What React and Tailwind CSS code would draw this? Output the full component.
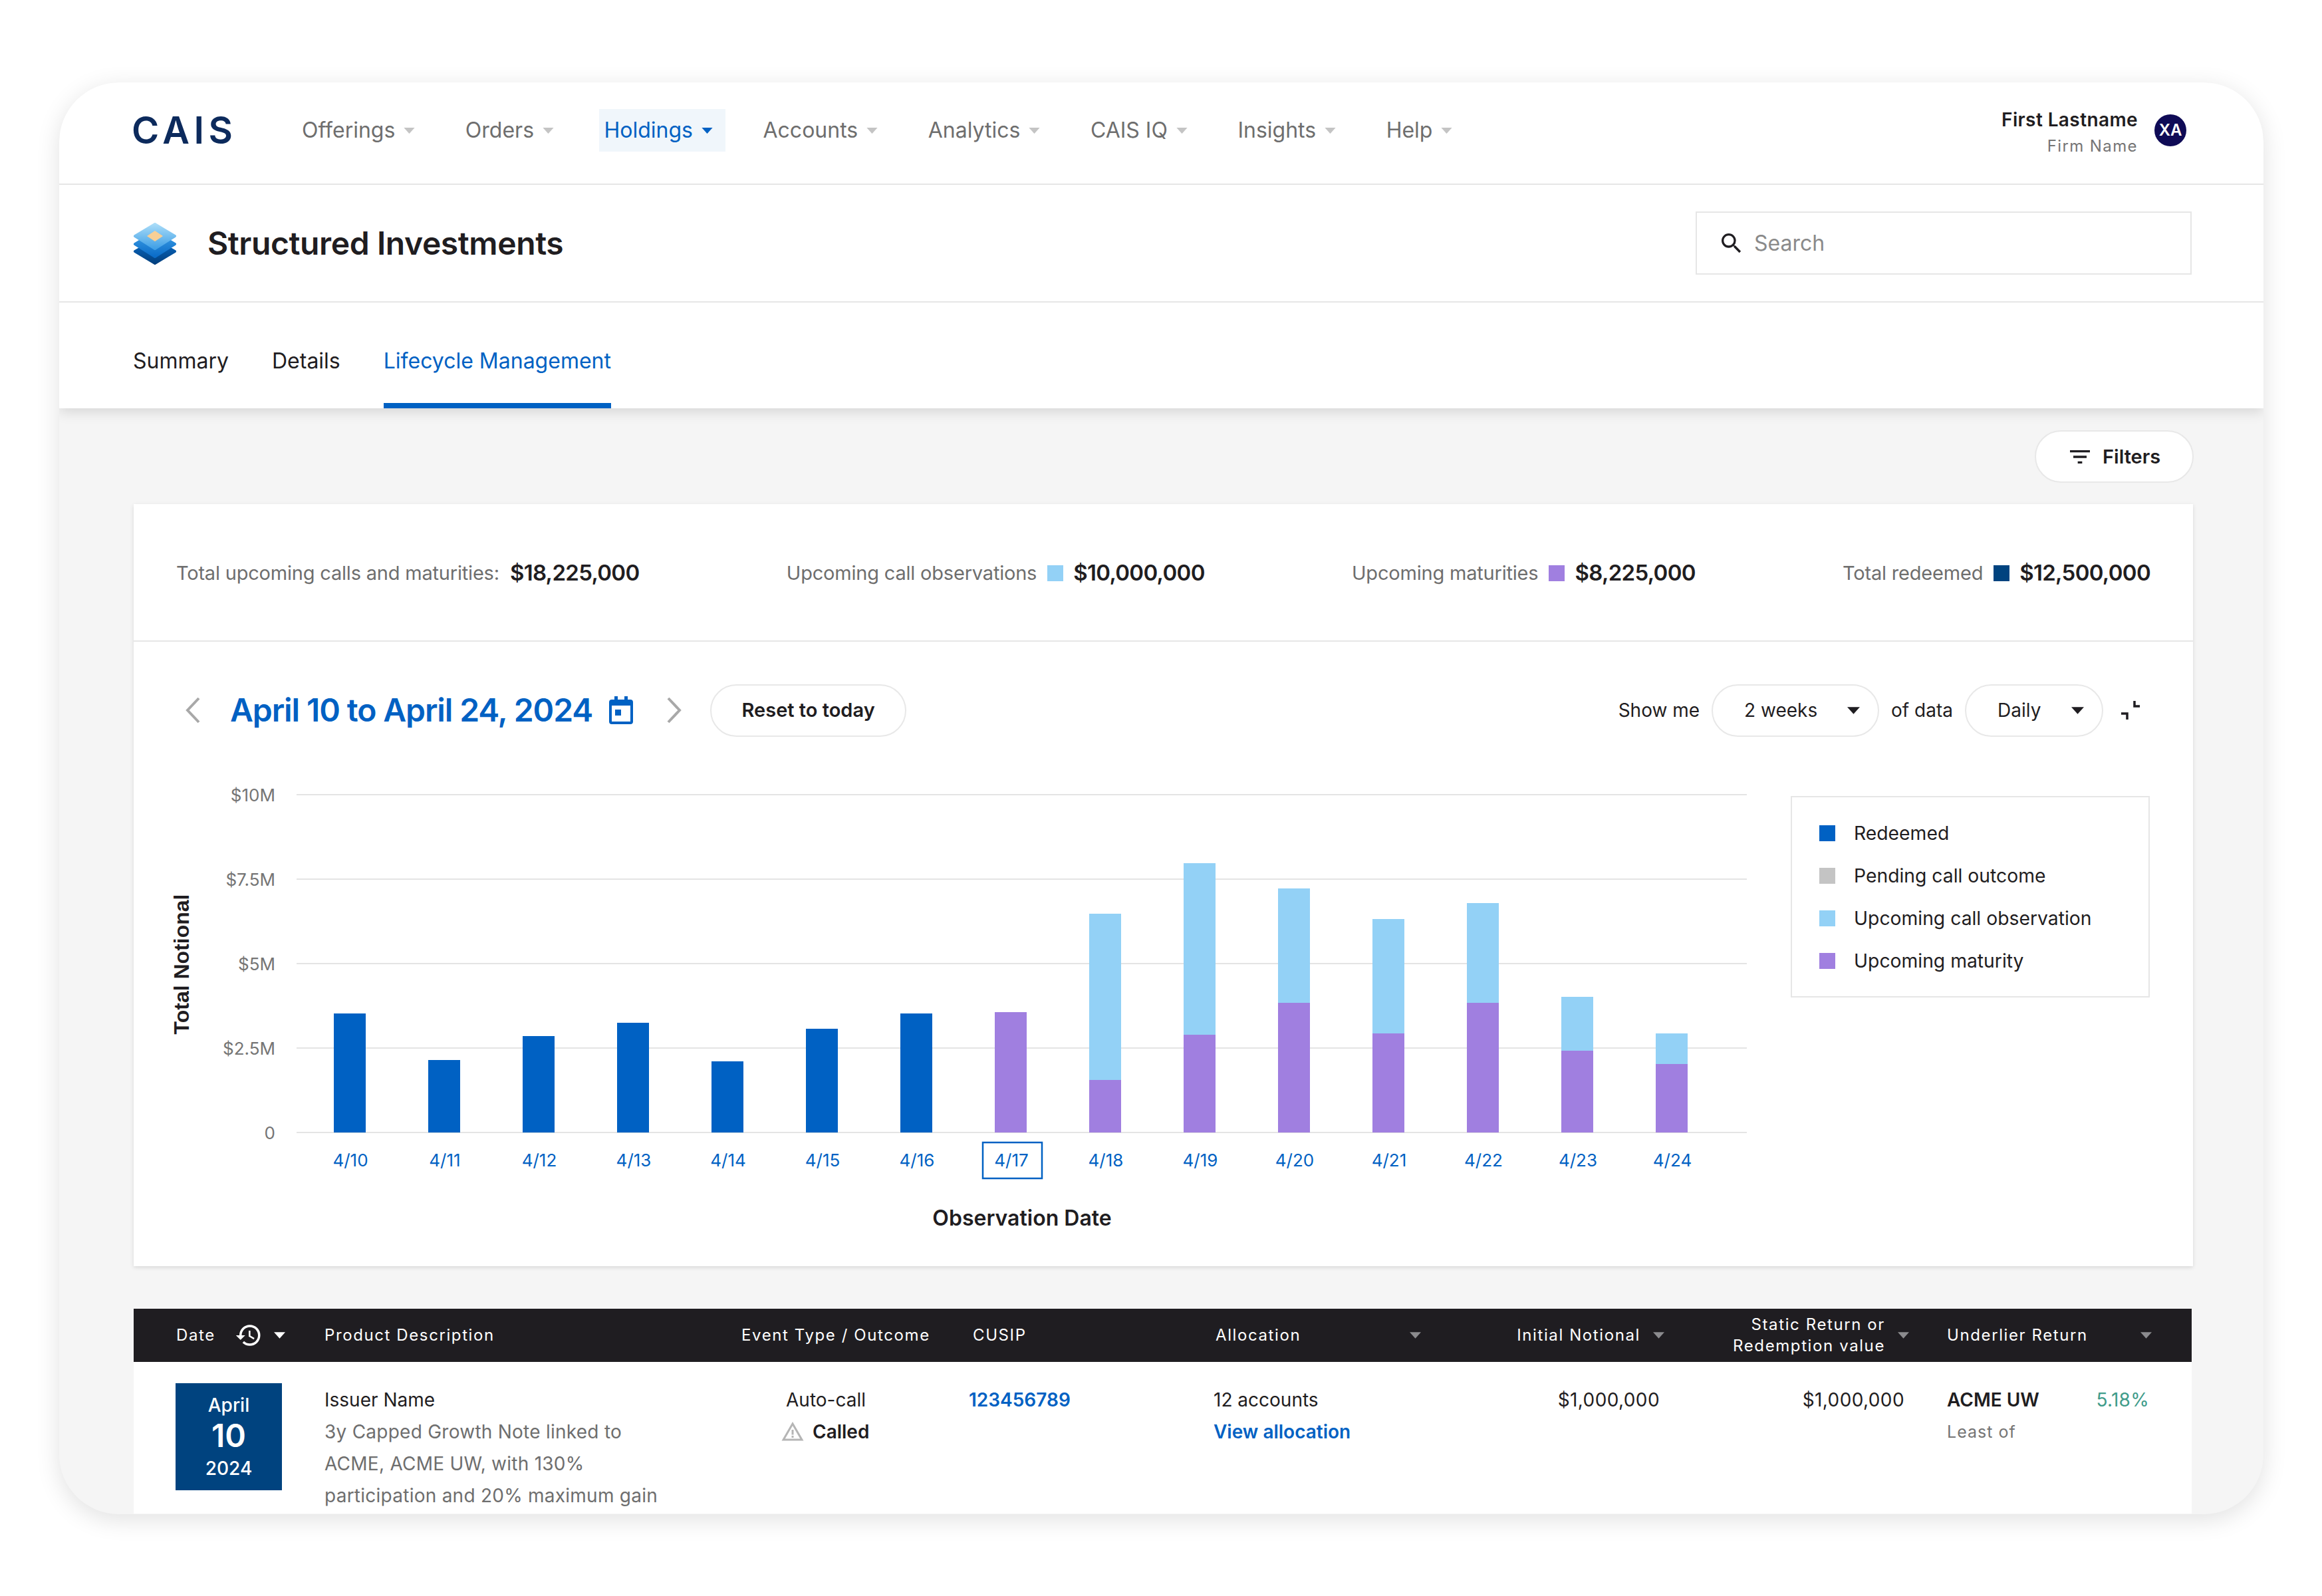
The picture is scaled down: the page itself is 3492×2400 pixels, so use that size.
import { MdSearch, MdFilterList, MdHistory, MdWarningAmber } from 'react-icons/md';

const NAV = ['Offerings', 'Orders', 'Holdings', 'Accounts', 'Analytics', 'CAIS IQ', 'Insights', 'Help'];

const BARS = [
  { redeemed: 1524 },
  { redeemed: 1594 },
  { redeemed: 1558 },
  { redeemed: 1538 },
  { redeemed: 1596 },
  { redeemed: 1547 },
  { redeemed: 1524 },
  { maturity: 1522 },
  { maturity: 1624, call: 1374 },
  { maturity: 1556, call: 1298 },
  { maturity: 1508, call: 1336 },
  { maturity: 1554, call: 1382 },
  { maturity: 1508, call: 1358 },
  { maturity: 1580, call: 1499 },
  { maturity: 1600, call: 1554 },
];

const GRID = [
  { y: 1195, label: '$10M' },
  { y: 1322, label: '$7.5M' },
  { y: 1449, label: '$5M' },
  { y: 1576, label: '$2.5M' },
  { y: 1703, label: '0' },
];

const LEGEND = [
  { label: 'Redeemed', color: 'bg-[#0061c3]' },
  { label: 'Pending call outcome', color: 'bg-[#c4c4c4]' },
  { label: 'Upcoming call observation', color: 'bg-[#93d1f6]' },
  { label: 'Upcoming maturity', color: 'bg-[#a07fe0]' },
];

const Caret = ({ className }) => (
  <svg viewBox="0 0 18 10" className={className}>
    <path d="M0 0h18L9 10z" fill="currentColor" />
  </svg>
);

const NavItem = ({ label }) => {
  const active = label === 'Holdings';
  return (
    <div
      className={
        active
          ? 'flex items-center gap-[13px] h-[64px] pl-[8px] pr-[19px] -ml-[8px] -mr-[19px] bg-[#f0f6fb] text-[#0061c3]'
          : 'flex items-center gap-[13px] h-[64px] text-[#6e6e6e]'
      }
    >
      <span className="text-[32px] leading-none">{label}</span>
      <Caret className={active ? 'w-[17px] h-[9px] text-[#0061c3]' : 'w-[17px] h-[9px] text-[#c4c4c4]'} />
    </div>
  );
};

const StackIcon = () => (
  <svg viewBox="0 0 66 64" className="w-[66px] h-[64px]">
    <defs>
      <linearGradient id="layerA" x1="0" y1="0" x2="0" y2="1">
        <stop offset="0" stopColor="#a9dcf8" />
        <stop offset="1" stopColor="#3f9fe6" />
      </linearGradient>
      <linearGradient id="layerB" x1="0" y1="0" x2="0" y2="1">
        <stop offset="0" stopColor="#3f9fe6" />
        <stop offset="1" stopColor="#0a6cc8" />
      </linearGradient>
      <linearGradient id="layerC" x1="0" y1="0" x2="0" y2="1">
        <stop offset="0" stopColor="#0a6cc8" />
        <stop offset="1" stopColor="#02407f" />
      </linearGradient>
    </defs>
    <path d="M33 27 63 44 33 62 3 44z" fill="url(#layerC)" stroke="url(#layerC)" strokeWidth="4" strokeLinejoin="round" />
    <path d="M33 15 63 33 33 52 3 33z" fill="url(#layerB)" stroke="url(#layerB)" strokeWidth="4" strokeLinejoin="round" />
    <path d="M33 3 63 21 33 40 3 21z" fill="url(#layerA)" stroke="url(#layerA)" strokeWidth="4" strokeLinejoin="round" />
    <path d="M33 13 45 21 33 29 21 21z" fill="#f8cf95" />
  </svg>
);

const Stat = ({ label, value, swatch }) => (
  <div className="flex items-center">
    <span className="text-[29px] text-[#6e6e6e] tracking-[-0.2px]">{label}</span>
    {swatch && <span className={`w-[24px] h-[24px] ml-[16px] ${swatch}`} />}
    <span className={`text-[33px] font-semibold text-[#1f1d21] tracking-[-0.7px] ${swatch ? 'ml-[15px]' : 'ml-[16px]'}`}>
      {value}
    </span>
  </div>
);

const Select = ({ label, width, textWidth }) => (
  <div className={`flex items-center h-[79px] pl-[47px] rounded-full border-2 border-[#e8e8e8] bg-white ${width}`}>
    <span className={`text-[28px] text-[#1f1d21] ${textWidth}`}>{label}</span>
    <Caret className="w-[19px] h-[11px] text-[#1f1d21]" />
  </div>
);

const Chart = () => (
  <svg viewBox="201 1180 2440 724" className="w-[2440px] h-[724px] shrink-0">
    {GRID.map((g) => (
      <g key={g.y}>
        <line x1="446" x2="2627" y1={g.y} y2={g.y} stroke="#e4e4e4" strokeWidth="2" />
        <text x="414" y={g.y + 10} textAnchor="end" className="fill-[#757575] text-[26px]">
          {g.label}
        </text>
      </g>
    ))}
    {BARS.map((b, i) => {
      const x = 502 + i * 142;
      return (
        <g key={i}>
          {b.redeemed && <rect x={x} y={b.redeemed} width="48" height={1703 - b.redeemed} fill="#0061c3" />}
          {b.call && <rect x={x} y={b.call} width="48" height={b.maturity - b.call} fill="#93d1f6" />}
          {b.maturity && <rect x={x} y={b.maturity} width="48" height={1703 - b.maturity} fill="#a07fe0" />}
          <text x={527 + i * 142} y="1754" textAnchor="middle" className="fill-[#0061c3] text-[26px]">
            {`4/${10 + i}`}
          </text>
        </g>
      );
    })}
    <rect x="1478" y="1718" width="89" height="54" fill="none" stroke="#0061c3" strokeWidth="2.500" />
    <text x="1537" y="1843" textAnchor="middle" className="fill-[#1f1d21] text-[32px] font-semibold">
      Observation Date
    </text>
    <text
      transform="translate(284 1450) rotate(-90)"
      textAnchor="middle"
      className="fill-[#1f1d21] text-[32px] font-bold font-['Liberation_Sans',sans-serif]"
    >
      Total Notional
    </text>
  </svg>
);

const HeaderLabel = ({ children, className = '' }) => (
  <span className={`text-[24px] leading-[32px] tracking-[1.6px] text-white ${className}`}>{children}</span>
);

const HeaderCaret = () => <Caret className="w-[17px] h-[10px] text-[#8b8b8e] shrink-0" />;

const Table = () => (
  <div className="mt-[64px] mr-[2px] bg-white">
    <div className="flex items-center h-[80px] pl-[64px] bg-[#1f1d21]">
      <div className="flex items-center w-[223px]">
        <HeaderLabel className="w-[88px]">Date</HeaderLabel>
        <MdHistory className="w-[42px] h-[42px] text-white" />
        <Caret className="w-[17px] h-[10px] text-white ml-[17px]" />
      </div>
      <HeaderLabel className="w-[627px]">Product Description</HeaderLabel>
      <HeaderLabel className="w-[348px]">Event Type / Outcome</HeaderLabel>
      <HeaderLabel className="w-[365px]">CUSIP</HeaderLabel>
      <div className="flex items-center justify-between w-[309px]">
        <HeaderLabel>Allocation</HeaderLabel>
        <HeaderCaret />
      </div>
      <div className="flex items-center justify-end gap-[19px] w-[366px]">
        <HeaderLabel>Initial Notional</HeaderLabel>
        <HeaderCaret />
      </div>
      <div className="flex items-center justify-end gap-[19px] w-[368px]">
        <HeaderLabel className="text-right">
          Static Return or
          <br />
          Redemption value
        </HeaderLabel>
        <HeaderCaret />
      </div>
      <div className="flex items-center justify-between w-[365px] pl-[57px]">
        <HeaderLabel>Underlier Return</HeaderLabel>
        <HeaderCaret />
      </div>
    </div>
    <div className="flex h-[228px] pl-[63px] pt-[32px] text-[28px] leading-[48px] text-[#1f1d21]">
      <div className="flex flex-col items-center w-[160px] h-[161px] pt-[14px] bg-[#00437f] text-white">
        <span className="text-[28px] leading-[38px] font-medium">April</span>
        <span className="text-[48px] leading-[54px] font-semibold">10</span>
        <span className="text-[28px] leading-[44px] font-medium">2024</span>
      </div>
      <div className="w-[694px] ml-[64px] mt-[1px]">
        <div>Issuer Name</div>
        <div className="text-[#6e6e6e] tracking-[0.25px]">
          3y Capped Growth Note linked to
          <br />
          ACME, ACME UW, with 130%
          <br />
          participation and 20% maximum gain
        </div>
      </div>
      <div className="w-[275px] mt-[1px]">
        <div>Auto-call</div>
        <div className="flex items-center gap-[12px] -ml-[8px] font-semibold">
          <MdWarningAmber className="w-[36px] h-[36px] text-[#b5b5b5]" />
          Called
        </div>
      </div>
      <div className="w-[368px] mt-[1px] font-semibold text-[#0061c3]">123456789</div>
      <div className="w-[455px] mt-[1px]">
        <div>12 accounts</div>
        <div className="font-semibold text-[#0061c3]">View allocation</div>
      </div>
      <div className="w-[216px] mt-[1px] text-right tracking-[0.4px]">$1,000,000</div>
      <div className="w-[368px] mt-[1px] text-right tracking-[0.4px]">$1,000,000</div>
      <div className="w-[304px] ml-[64px] mt-[1px]">
        <div className="flex justify-between">
          <span className="font-semibold">ACME UW</span>
          <span className="text-[#3f9c8a] tracking-[0.3px]">5.18%</span>
        </div>
        <div className="text-[25px] tracking-[1px] text-[#757575]">Least of</div>
      </div>
    </div>
  </div>
);

const App = () => (
  <div className="min-h-[2400px] bg-white pt-[124px] pl-[89px] font-[Inter,sans-serif]">
    <div className="w-[3315px] h-[2153px] overflow-hidden rounded-[90px] bg-[#f5f5f5] shadow-[0_8px_36px_rgba(0,0,0,0.12)]">
      <div className="relative z-10 bg-white shadow-[0_6px_18px_rgba(0,0,0,0.12)]">
        <header className="flex items-center h-[154px] pl-[109px] pr-[116px] pb-[8px] border-b-2 border-[#e6e6e6]">
          <span className="w-[256px] text-[56px] leading-none font-semibold tracking-[6.500px] text-[#0c2a5c]">CAIS</span>
          <nav className="flex items-center gap-[75.500px]">
            {NAV.map((n) => (
              <NavItem key={n} label={n} />
            ))}
          </nav>
          <div className="flex items-center gap-[25px] ml-auto">
            <div className="mt-[9px] text-right">
              <div className="text-[28px] leading-[38px] font-semibold tracking-[0.4px] text-[#1f1d21]">First Lastname</div>
              <div className="text-[24px] leading-[42px] tracking-[1.4px] text-[#757575]">Firm Name</div>
            </div>
            <div className="flex items-center justify-center w-[48px] h-[48px] rounded-full bg-[#0f0b56] text-[24px] font-semibold text-white">
              XA
            </div>
          </div>
        </header>
        <div className="flex items-center justify-between h-[177px] pl-[111px] pr-[108px] border-b-2 border-[#e6e6e6]">
          <div className="flex items-center gap-[46px]">
            <StackIcon />
            <h1 className="text-[48px] font-semibold text-[#1f1d21] tracking-[-0.4px]">Structured Investments</h1>
          </div>
          <div className="flex items-center w-[746px] h-[95px] pl-[32px] border-2 border-[#e6e6e6]">
            <MdSearch className="w-[40px] h-[40px] text-[#1f1d21]" />
            <span className="ml-[14px] text-[32px] text-[#8a8a8a]">Search</span>
          </div>
        </div>
        <div className="flex gap-[65px] h-[159px] pl-[111px]">
          <div className="flex items-center pt-[24px] pb-[8px] text-[32px] text-[#1f1d21]">Summary</div>
          <div className="flex items-center pt-[24px] pb-[8px] text-[32px] text-[#1f1d21]">Details</div>
          <div className="flex items-center pt-[24px] text-[32px] text-[#0061c3] border-b-8 border-[#0061c3]">
            Lifecycle Management
          </div>
        </div>
      </div>
      <div className="pl-[112px] pr-[106px]">
        <div className="flex justify-end pt-[33px] h-[144px]">
          <div className="flex items-center h-[79px] w-[239px] -mr-[1px] pl-[46px] gap-[14px] rounded-full border-2 border-[#e8e8e8] bg-white">
            <MdFilterList className="w-[40px] h-[40px] text-[#1f1d21]" />
            <span className="text-[29px] font-semibold text-[#1f1d21]">Filters</span>
          </div>
        </div>
        <section className="bg-white shadow-[0_2px_6px_rgba(0,0,0,0.12)]">
          <div className="flex items-center justify-between h-[207px] pt-[2px] px-[64px] border-b-2 border-[#e6e6e6]">
            <Stat label="Total upcoming calls and maturities:" value="$18,225,000" />
            <Stat label="Upcoming call observations" value="$10,000,000" swatch="bg-[#93d1f6]" />
            <Stat label="Upcoming maturities" value="$8,225,000" swatch="bg-[#a07fe0]" />
            <Stat label="Total redeemed" value="$12,500,000" swatch="bg-[#00437f]" />
          </div>
          <div className="flex items-center h-[206px] mb-[9px] pl-[77px] pr-[80px]">
            <svg viewBox="0 0 24 40" className="w-[24px] h-[40px]">
              <path d="M21 2 4 20l17 18" fill="none" stroke="#a8a8a8" strokeWidth="4" />
            </svg>
            <span className="ml-[44px] text-[48px] font-semibold text-[#0061c3] tracking-[-1.100px]">April 10 to April 24, 2024</span>
            <svg viewBox="0 0 36 42" className="w-[36px] h-[42px] ml-[25px]">
              <path d="M8 0h5v5h10V0h5v5h4a4 4 0 0 1 4 4v29a4 4 0 0 1-4 4H4a4 4 0 0 1-4-4V9a4 4 0 0 1 4-4h4z" fill="#0061c3" />
              <rect x="4" y="14" width="28" height="24" fill="#fff" />
              <rect x="9" y="20" width="9" height="9" fill="#0061c3" />
            </svg>
            <svg viewBox="0 0 24 40" className="w-[24px] h-[40px] ml-[50px]">
              <path d="M3 2l17 18L3 38" fill="none" stroke="#a8a8a8" strokeWidth="4" />
            </svg>
            <div className="flex items-center justify-center w-[295px] h-[79px] ml-[42px] rounded-full border-2 border-[#e8e8e8] text-[29px] font-semibold text-[#1f1d21]">
              Reset to today
            </div>
            <div className="flex items-center ml-auto">
              <span className="text-[28px] text-[#1f1d21]">Show me</span>
              <div className="ml-[18px]">
                <Select label="2 weeks" width="w-[252px]" textWidth="w-[155px]" />
              </div>
              <span className="mx-[18px] text-[28px] text-[#1f1d21]">of data</span>
              <Select label="Daily" width="w-[208px]" textWidth="w-[111px]" />
              <svg viewBox="0 0 28 28" className="w-[28px] h-[28px] ml-[27px]">
                <path d="M20 0v8h8M0 19h9v9" fill="none" stroke="#1f1d21" strokeWidth="3.500" />
              </svg>
            </div>
          </div>
          <div className="flex">
            <Chart />
            <div className="flex flex-col w-[540px] h-[303px] ml-[52px] mt-[17px] pt-[22px] pl-[41px] border-2 border-[#e6e6e6]">
              {LEGEND.map((l) => (
                <div key={l.label} className="flex items-center h-[64px]">
                  <span className={`w-[24px] h-[24px] ${l.color}`} />
                  <span className="ml-[28px] text-[28.300px] text-[#1f1d21]">{l.label}</span>
                </div>
              ))}
            </div>
          </div>
        </section>
        <Table />
      </div>
    </div>
  </div>
);

export default App;
